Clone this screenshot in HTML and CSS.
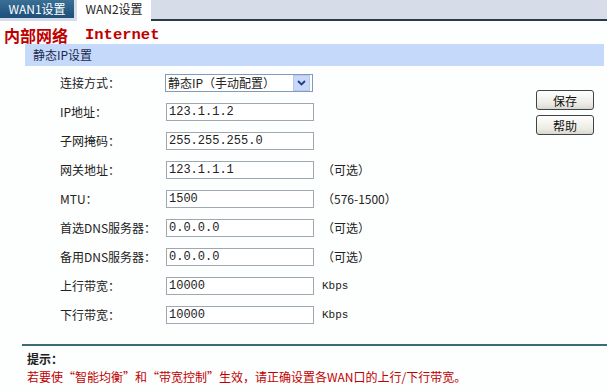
FILE: index.html
```html
<!DOCTYPE html>
<html lang="zh-CN">
<head>
    <meta charset="UTF-8">
    <title>WAN2设置</title>
    <link rel="stylesheet" href="styles.css">
</head>
<body>
    <div class="tabs">
        <div class="tab tab-off">WAN1设置</div>
        <div class="tab tab-on">WAN2设置</div>
        <div class="tab-rest"></div>
    </div>

    <div class="heading">
        <span>内部网络</span>
        <span class="latin">Internet</span>
    </div>

    <div class="band">静态IP设置</div>

    <div class="main">
        <div class="rows">
            <div class="row">
                <label>连接方式：</label>
                <div class="sel">
                    <span>静态IP（手动配置）</span>
                    <span class="sel-btn">
                        <svg width="9" height="6" viewBox="0 0 9 6"><path d="M1 1 L4.5 4.5 L8 1" fill="none" stroke="#1d3f8a" stroke-width="1.8"/></svg>
                    </span>
                </div>
                <span></span>
            </div>
            <div class="row">
                <label>IP地址：</label>
                <input type="text" value="123.1.1.2">
                <span></span>
            </div>
            <div class="row">
                <label>子网掩码：</label>
                <input type="text" value="255.255.255.0">
                <span></span>
            </div>
            <div class="row">
                <label>网关地址：</label>
                <input type="text" value="123.1.1.1">
                <span class="note">（可选）</span>
            </div>
            <div class="row">
                <label>MTU：</label>
                <input type="text" value="1500">
                <span class="note">（576-1500）</span>
            </div>
            <div class="row">
                <label>首选DNS服务器：</label>
                <input type="text" value="0.0.0.0">
                <span class="note">（可选）</span>
            </div>
            <div class="row">
                <label>备用DNS服务器：</label>
                <input type="text" value="0.0.0.0">
                <span class="note">（可选）</span>
            </div>
            <div class="row">
                <label>上行带宽：</label>
                <input type="text" value="10000">
                <span class="unit">Kbps</span>
            </div>
            <div class="row">
                <label>下行带宽：</label>
                <input type="text" value="10000">
                <span class="unit">Kbps</span>
            </div>
        </div>

        <div class="buttons">
            <button>保存</button>
            <button>帮助</button>
        </div>
    </div>

    <div class="tip">
        <div class="tip-title">提示：</div>
        <div class="tip-text">若要使“智能均衡”和“带宽控制”生效，请正确设置各WAN口的上行/下行带宽。</div>
    </div>
</body>
</html>
```

FILE: styles.css
```css
body {
    margin: 0;
    font-family: "Noto Sans CJK SC", sans-serif;
    font-size: 12px;
    color: #222;
    background: #fdfefe;
}

.tabs {
    display: flex;
    height: 21px;
    background: #d6dde8;
}
.tab {
    width: 74px;
    line-height: 18px;
    text-align: center;
    font-size: 12px;
}
.tab-off {
    height: 18px;
    margin-right: 3px;
    color: #fff;
    background: linear-gradient(#3a6f96, #1d4f78);
}
.tab-on {
    height: 21px;
    color: #222;
    background: #fff;
}
.tab-rest {
    flex: 1;
    height: 19px;
    border-bottom: 2px solid #2b3a48;
}

.heading {
    display: flex;
    gap: 17px;
    height: 18px;
    padding: 5px 0 0 4px;
    color: #c00000;
    font-size: 16px;
    font-weight: bold;
    line-height: 18px;
}
.heading .latin {
    font-family: "Liberation Mono", monospace;
    font-size: 15.5px;
}

.band {
    margin: 0 3px 0 25px;
    height: 22px;
    padding-left: 8px;
    line-height: 21px;
    background: #c5d9fa;
    color: #1c2a4e;
}

.main {
    display: flex;
    padding-top: 2px;
}
.rows {
    display: flex;
    flex-direction: column;
}
.row {
    display: grid;
    grid-template-columns: 106px 156px auto;
    align-items: center;
    height: 29px;
    padding-left: 60px;
}
.row label {
    color: #222;
}
.row input,
.sel {
    box-sizing: border-box;
    width: 148px;
    height: 18px;
    margin: 0;
    border: 1px solid #9ea8b3;
    padding: 0 2px;
    font-family: "Liberation Mono", "Noto Sans CJK SC", monospace;
    font-size: 12px;
    color: #222;
    background: #fff;
}
.sel {
    display: flex;
    align-items: center;
    justify-content: space-between;
    margin-left: -1px;
    border-color: #7f9db9;
    font-family: "Noto Sans CJK SC", sans-serif;
    line-height: 16px;
}
.sel-btn {
    display: flex;
    align-items: center;
    justify-content: center;
    width: 15px;
    height: 14px;
    border: 1px solid #b7c8ef;
    background: #c9d8f8;
}
.note {
    font-size: 12px;
}
.unit {
    font-family: "Liberation Mono", monospace;
    font-size: 11px;
}

.buttons {
    display: flex;
    flex-direction: column;
    gap: 5px;
    margin: 22px 0 0 auto;
    padding-right: 13px;
}
.buttons button {
    width: 58px;
    height: 20px;
    padding: 0;
    border: 1px solid #3f4447;
    border-radius: 3px;
    background: linear-gradient(#ffffff, #ecebe4 70%, #d9d8d0);
    font-family: "Noto Sans CJK SC", sans-serif;
    font-size: 12px;
    color: #111;
}

.tip {
    margin: 15px 0 0 22px;
    padding: 5px 0 0 5px;
    border-top: 2px solid #3b6b75;
}
.tip-title {
    font-weight: bold;
    line-height: 15px;
}
.tip-text {
    margin-top: 3px;
    color: #c00000;
    line-height: 15px;
}
```
